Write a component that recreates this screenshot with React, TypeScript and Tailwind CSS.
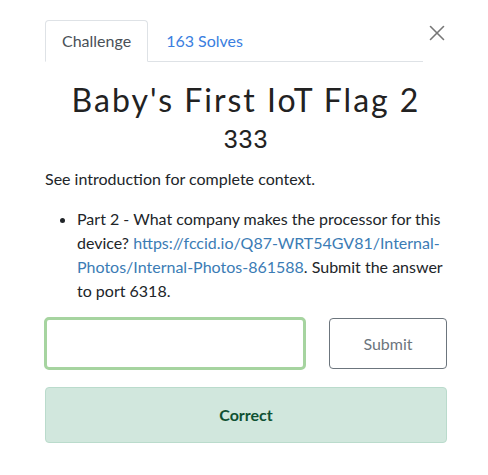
import { X } from "lucide-react";

export default function App() {
  return (
    <div className="w-[488px] h-[475px] bg-white font-['Lato',sans-serif] text-[#212529]">
      <div className="pl-[45px] pr-[41px] pt-[20px]">
        <div className="flex items-start">
          <ul className="flex w-[378px] border-b border-[#dee2e6]">
            <li className="-mb-px h-[42px] rounded-t-[4px] border border-[#dee2e6] border-b-white bg-white px-4 flex items-center text-[16px] text-[#495057]">
              Challenge
            </li>
            <li className="h-[41px] px-[18px] flex items-center text-[16px] text-[#3a7ee0]">
              163 Solves
            </li>
          </ul>
          <button className="ml-auto mt-[0px] -mr-[3px] text-[#777]">
            <X className="h-[26px] w-[26px]" strokeWidth={1.5} />
          </button>
        </div>

        <h2 className="mt-[18px] text-center text-[32px] leading-[40px] tracking-[2px] text-[#222]">
          Baby's First IoT Flag 2
        </h2>
        <h3 className="mt-[2px] text-center font-['Liberation_Sans',sans-serif] text-[25px] leading-[34px] tracking-[1px] text-[#222]">
          333
        </h3>

        <p className="mt-[11px] text-[16px] leading-[24px]">
          See introduction for complete context.
        </p>
        <ul className="mt-[16px] list-disc pl-[32px] text-[16px] leading-[24px]">
          <li>
            Part 2 - What company makes the processor for this device?{" "}
            <a className="text-[#3b7cb5]">
              https://fccid.io/Q87-WRT54GV81/Internal-Photos/Internal-Photos-861588
            </a>
            . Submit the answer to port 6318.
          </li>
        </ul>

        <div className="mt-[14px] flex items-center">
          <input className="h-[53px] w-[262px] -ml-px rounded-[5px] border-[3px] border-[#a6d4a0] bg-white outline-none" />
          <button className="ml-auto h-[51px] w-[118px] rounded-[4px] border border-[#6c757d] text-[16px] text-[#6c757d]">
            Submit
          </button>
        </div>

        <div className="mt-[17px] h-[56px] rounded-[4px] border border-[#badbcc] bg-[#d1e7dd] flex items-center justify-center text-[16px] font-bold text-[#0f5132]">
          Correct
        </div>
      </div>
    </div>
  );
}
